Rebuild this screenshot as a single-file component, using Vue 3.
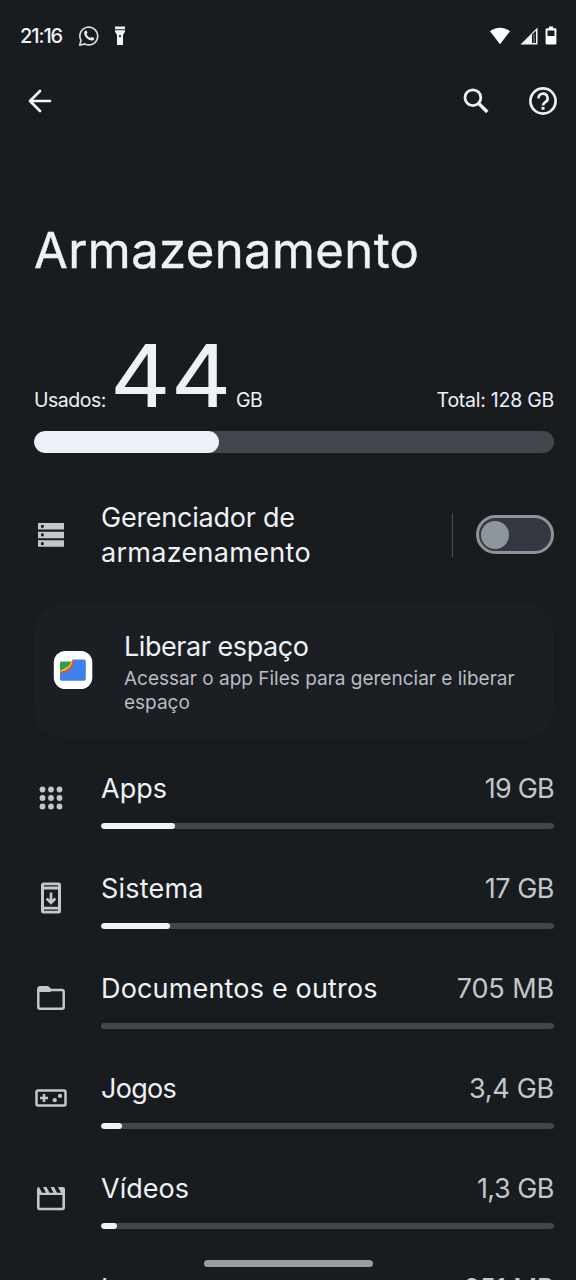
<script setup>
const rows = [
  { key: 'apps', name: 'Apps', size: '19 GB', fill: 73.5 },
  { key: 'system', name: 'Sistema', size: '17 GB', fill: 69 },
  { key: 'docs', name: 'Documentos e outros', size: '705 MB', fill: 0 },
  { key: 'games', name: 'Jogos', size: '3,4 GB', fill: 21 },
  { key: 'videos', name: 'Vídeos', size: '1,3 GB', fill: 16 },
  { key: 'images', name: 'Imagens', size: '251 MB', fill: 6 },
]
</script>

<template>
  <div class="screen">
    <header class="status">
      <span class="clock">21:16</span>
      <svg class="wa" width="22" height="22" viewBox="0 0 22 22">
        <path d="M1.800 20.200 3 15.300A8.900 8.900 0 1 1 6.700 18.900Z" fill="none" stroke="#d9dcde" stroke-width="1.700" stroke-linejoin="round" />
        <path d="M7.200 5.800c.7-.6 1.300-.4 1.600.3l.6 1.500c.2.6-.6 1.200-.8 1.600.8 1.800 2 3 3.900 3.800.5-.3 1-1.200 1.600-1l1.900.9c.6.4.2 1.500-.4 2-1.800 1.400-4.600.2-6.600-1.400C7 11.500 4.800 8 7.200 5.800Z" fill="#e8eaec" />
      </svg>
      <svg class="torch" width="12" height="20" viewBox="0 0 12 20">
        <path d="M1 .5h10v2.700H1ZM1 4.300h10v1.200L9 9v10H3V9L1 5.500Z" fill="#f2f4f6" />
        <circle cx="6" cy="10.200" r="1.100" fill="#191c1f" />
      </svg>
      <span class="grow"></span>
      <svg class="wifi" width="22" height="18" viewBox="0 0 22 18">
        <path d="M1 4.300C6.500-.5 15.500-.5 21 4.300L11 17.300Z" fill="#fff" />
      </svg>
      <svg class="signal" width="18" height="18" viewBox="0 0 18 18">
        <path d="M.5 17.500 17.500.5V17.500Z" fill="#f1f3f5" />
        <path d="M12 7.600 16 3.800V16H12Z" fill="#191c1f" />
        <path d="M13.500 7h1v9h-1Z" fill="#8c9093" />
      </svg>
      <svg class="battery" width="12" height="19" viewBox="0 0 12 19">
        <path d="M4 .5h4v1.700h2.200a1.200 1.200 0 0 1 1.200 1.200v13.900a1.200 1.200 0 0 1-1.200 1.200H1.800A1.200 1.200 0 0 1 .6 17.300V3.400A1.200 1.200 0 0 1 1.800 2.200H4Z" fill="#fff" />
        <path d="M2.500 4.500h7v5.500h-7Z" fill="#191c1f" />
      </svg>
    </header>

    <nav class="appbar">
      <svg width="24" height="24" viewBox="0 0 24 24" fill="none" stroke="#f5f7f9" stroke-width="2.700" stroke-linecap="round" stroke-linejoin="round">
        <path d="M22 12H2M12 2 2 12l10 10" />
      </svg>
      <span class="grow"></span>
      <svg class="search" width="28" height="28" viewBox="0 0 28 28" fill="none" stroke="#eef1f4" stroke-width="2.800">
        <circle cx="10.900" cy="10.700" r="7.900" />
        <path d="m16.300 16 9 9" stroke-width="3.400" />
      </svg>
      <svg class="help" width="30" height="30" viewBox="0 0 30 30" fill="none" stroke="#eef1f4" stroke-width="2.700">
        <circle cx="15" cy="15" r="12.600" />
        <path d="M10.600 12.400a4.500 4.500 0 1 1 6.700 3.700c-1.600 1-2.300 1.600-2.300 3.400" />
        <path d="M13.500 20.900h3v2.800h-3Z" fill="#eef1f4" stroke="none" />
      </svg>
    </nav>

    <h1>Armazenamento</h1>

    <section class="summary">
      <div class="figures">
        <span class="used">Usados:</span>
        <strong>44</strong>
        <span class="unit">GB</span>
        <span class="grow"></span>
        <span class="total">Total: 128 GB</span>
      </div>
      <div class="meter"><div class="meter-fill"></div></div>
    </section>

    <section class="manager">
      <svg class="manager-icon" width="26" height="24" viewBox="0 0 26 24">
        <path d="M0 0h26v6.500H0ZM0 8.700h26v6.500H0ZM0 17.300h26v6.500H0Z" fill="#c3c7ca" />
        <path d="M3 2h2.700v2.700H3ZM3 10.600h2.700v2.700H3ZM3 19.200h2.700v2.700H3Z" fill="#191c1f" />
      </svg>
      <p><span class="first">Gerenciador de</span><br /><span class="second">armazenamento</span></p>
      <span class="divider"></span>
      <span class="switch"><span class="knob"></span></span>
    </section>

    <section class="card">
      <svg width="40" height="40" viewBox="0 0 40 40">
        <rect x=".8" y="1" width="38.500" height="38" rx="11.500" fill="#fff" />
        <path d="M21 9.500h10.200a1.600 1.600 0 0 1 1.600 1.600v18a1.600 1.600 0 0 1-1.600 1.600H8.600A1.600 1.600 0 0 1 7 29.100V20Z" fill="#3f80ee" />
        <path d="M20.500 9.500c1 8-4 13.500-13.500 13.500v-4c7-.5 11.500-2.500 12.500-9.500Z" fill="#e25435" />
        <path d="M19.300 10.500C19 16.500 14 21 7 21.500c0-1.500.4-2.500 1.500-3.600l9-6.500Z" fill="#f5bd22" />
        <path d="M7 12.900a1.300 1.300 0 0 1 1.300-1.300H18C17 16 13 18.500 7 20.500Z" fill="#2e9d52" />
      </svg>
      <div class="card-copy">
        <h2>Liberar espaço</h2>
        <p>Acessar o app Files para gerenciar e liberar<br />espaço</p>
      </div>
    </section>

    <ul>
      <li v-for="row in rows" :key="row.key">
        <div class="glyph">
          <svg v-if="row.key === 'apps'" width="24" height="24" viewBox="0 0 24 24" fill="#c3c7ca">
            <template v-for="y in 3" :key="y">
              <circle v-for="x in 3" :key="x" :cx="x * 8.500 - 5" :cy="y * 8.500 - 5" r="2.900" />
            </template>
          </svg>
          <svg v-else-if="row.key === 'system'" width="22" height="32" viewBox="0 0 22 32" fill="none" stroke="#c3c7ca">
            <path fill="#c3c7ca" stroke="none" fill-rule="evenodd" d="M3.500.5h15a2.500 2.500 0 0 1 2.500 2.500v26a2.500 2.500 0 0 1-2.500 2.500h-15A2.500 2.500 0 0 1 1 29V3A2.500 2.500 0 0 1 3.500.5ZM4 3.200v1.300h14V3.200ZM4 7.400v17.300h14V7.400ZM4 27.500v1.300h14v-1.300Z" />
            <path d="M11 10.500v10M6.700 16.500l4.300 4.300 4.300-4.300" stroke-width="2.600" />
          </svg>
          <svg v-else-if="row.key === 'docs'" width="28" height="24" viewBox="0 0 28 24" fill="none" stroke="#c3c7ca" stroke-width="2.500">
            <path d="M1.300 3a1.700 1.700 0 0 1 1.700-1.700h7.800l2.700 2.700H25a1.700 1.700 0 0 1 1.700 1.700V21a1.700 1.700 0 0 1-1.700 1.700H3A1.700 1.700 0 0 1 1.300 21Z" stroke-linejoin="round" />
            <path d="M2 2h9l2.500 2.500v1H2Z" fill="#c3c7ca" stroke-width="1" />
          </svg>
          <svg v-else-if="row.key === 'games'" width="32" height="18" viewBox="0 0 32 18" fill="none" stroke="#c3c7ca" stroke-width="2.500">
            <rect x="1.500" y="1.500" width="29" height="15" rx="1.500" />
            <path d="M5 9h8M9 5v8" stroke-width="2.600" />
            <circle cx="19.700" cy="11.200" r="2.100" fill="#c3c7ca" stroke="none" />
            <circle cx="25" cy="6.900" r="2.100" fill="#c3c7ca" stroke="none" />
          </svg>
          <svg v-else-if="row.key === 'videos'" width="30" height="25" viewBox="0 0 30 26" preserveAspectRatio="none" fill="#c3c7ca">
            <path fill-rule="evenodd" d="M3 1 6 7h4L7 1h3.500l3 6h4l-3-6H18l3 6h4l-3-6h5a2 2 0 0 1 2 2v20a2.200 2.200 0 0 1-2.200 2.200H3.200A2.200 2.200 0 0 1 1 23V3a2 2 0 0 1 2-2ZM3.600 9.400v13.200h22.800V9.400Z" />
          </svg>
        </div>
        <div class="detail">
          <div class="labels">
            <span :class="['name', row.key]">{{ row.name }}</span>
            <span :class="['size', row.key]">{{ row.size }}</span>
          </div>
          <div class="track"><div v-if="row.fill" class="track-fill" :style="{ width: row.fill + 'px' }"></div></div>
        </div>
      </li>
    </ul>
    <div class="home"></div>
  </div>
</template>

<style>
html, body { background: #191c1f; }
</style>

<style scoped>
* { box-sizing: border-box; }
.screen {
  position: relative;
  width: 576px;
  height: 1280px;
  overflow: hidden;
  background: #191c1f;
  color: #eef1f6;
  font-family: Inter, "Liberation Sans", sans-serif;
  font-size: 27px;
}
svg { display: block; flex: none; }
h1, h2, p, ul, li { margin: 0; padding: 0; font-weight: 400; list-style: none; }
.grow { flex: 1; }
.status { display: flex; align-items: center; height: 71px; padding: 0 19px 0 20px; }
.clock { width: 43px; padding-top: 1px; font-size: 20px; letter-spacing: -1.100px; font-weight: 500; white-space: nowrap; }
.wa { margin-left: 15px; }
.torch { margin-left: 14px; }
.wifi { margin-right: 9px; }
.signal { margin-right: 7px; }
.appbar { display: flex; align-items: center; height: 60px; padding: 0 18px 0 28px; }
.search { margin-right: 38px; }
h1 { margin: 90px 0 0 34px; font-size: 49px; line-height: 60px; letter-spacing: .4px; -webkit-text-stroke: .4px currentColor; white-space: nowrap; }
.summary { padding: 55px 22px 0 34px; }
.figures { display: flex; align-items: baseline; height: 95px; font-size: 19.500px; line-height: 80px; white-space: nowrap; }
.figures strong { width: 122px; margin-left: 3px; font-size: 87px; font-weight: 400; line-height: 80px; transform: scaleX(1.080); transform-origin: 0 50%; }
.used { width: 73px; letter-spacing: -.500px; }
.unit { margin-left: 4px; letter-spacing: -.500px; }
.total { letter-spacing: -.250px; }
.meter { height: 22px; border-radius: 11px; background: #43464c; overflow: hidden; }
.meter-fill { width: 185px; height: 100%; border-radius: 11px; background: #edf0f8; }
.manager { display: flex; align-items: center; height: 69px; margin: 47px 22px 0 34px; padding-left: 4px; }
.manager p { width: 351px; margin-left: 37px; padding-top: 2px; line-height: 34.500px; white-space: nowrap; }
.first { letter-spacing: -.250px; }
.second { letter-spacing: .300px; }
.divider { width: 1px; height: 44px; background: #4a4e52; }
.switch { display: flex; align-items: center; width: 78px; height: 39px; margin-left: auto; padding-left: 2px; border: 3.500px solid #8e9399; border-radius: 20px; background: #343840; }
.knob { width: 28px; height: 28px; border-radius: 50%; background: #8f959d; }
.card { display: flex; align-items: center; height: 134px; margin: 35px 22px 0 34px; padding: 0 0 2px 19px; border-radius: 28px; background: #1b1e23; }
.card-copy { margin: 5px 0 0 31px; white-space: nowrap; }
.card h2 { font-size: 27px; line-height: 34px; margin-bottom: 3px; letter-spacing: -.450px; }
.card p { font-size: 19px; line-height: 24px; color: #b9bcc4; }
ul { padding: 31px 22px 0 34px; }
li { display: flex; height: 100px; }
.glyph { display: flex; align-items: center; justify-content: center; width: 33px; height: 58px; }
.detail { width: 453px; margin-left: 34px; }
.labels { display: flex; justify-content: space-between; height: 54px; line-height: 40px; white-space: nowrap; }
.size { color: #c3c6cc; letter-spacing: -.500px; }
.size.apps { letter-spacing: -.800px; }
.size.docs { letter-spacing: -.100px; }
.size.games { letter-spacing: -.300px; }
.name.system { letter-spacing: .200px; }
.name.docs { letter-spacing: .170px; }
.name.games { letter-spacing: -.700px; }
.track { height: 6px; border-radius: 3px; background: #43464a; overflow: hidden; }
.track-fill { height: 100%; border-radius: 3px; background: #f0f2f9; }
.home { position: absolute; left: 204px; top: 1260px; width: 169px; height: 7px; border-radius: 4px; background: #9a9e9f; }
</style>
